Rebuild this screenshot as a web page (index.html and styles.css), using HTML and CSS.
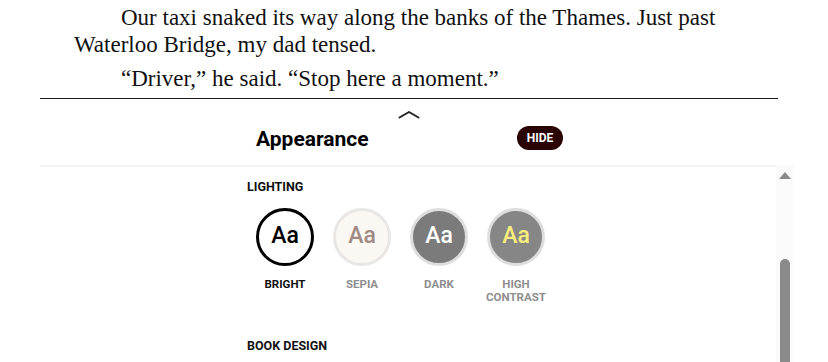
FILE: index.html
```html
<!DOCTYPE html>
<html lang="en">
<head>
<meta charset="utf-8">
<title>Reader</title>
<link rel="stylesheet" href="styles.css">
</head>
<body>
<div class="page">
  <div class="book-text">
    <p class="para">Our taxi snaked its way along the banks of the Thames. Just past Waterloo Bridge, my dad tensed.</p>
    <p class="para">“Driver,” he said. “Stop here a moment.”</p>
  </div>
  <div class="panel">
    <div class="handle">
      <svg class="caret" width="22" height="9" viewBox="0 0 22 9"><path d="M1.5 7.5 L11 2 L20.5 7.5" fill="none" stroke="#222" stroke-width="2" stroke-linecap="round" stroke-linejoin="round"/></svg>
    </div>
    <div class="header">
      <h2 class="title">Appearance</h2>
      <button class="hide-btn">HIDE</button>
    </div>
    <div class="body">
      <div class="scroll">
        <div class="content">
          <div class="section-label">LIGHTING</div>
          <div class="options">
            <div class="option">
              <div class="swatch swatch-bright">Aa</div>
              <div class="opt-label opt-active">BRIGHT</div>
            </div>
            <div class="option">
              <div class="swatch swatch-sepia">Aa</div>
              <div class="opt-label">SEPIA</div>
            </div>
            <div class="option">
              <div class="swatch swatch-dark">Aa</div>
              <div class="opt-label">DARK</div>
            </div>
            <div class="option">
              <div class="swatch swatch-contrast">Aa</div>
              <div class="opt-label">HIGH<br>CONTRAST</div>
            </div>
          </div>
          <div class="section-label section-book">BOOK DESIGN</div>
        </div>
      </div>
      <div class="scrollbar">
        <div class="sb-arrow"></div>
        <div class="sb-space"></div>
        <div class="sb-thumb"></div>
      </div>
    </div>
  </div>
</div>
</body>
</html>
```
FILE: styles.css
```css
html, body {
  margin: 0;
  padding: 0;
  background: #fff;
  overflow: hidden;
}
.page {
  width: 828px;
  height: 362px;
  overflow: hidden;
}
.book-text {
  padding: 4px 50px 0 74px;
  font-family: "Liberation Serif", "Times New Roman", serif;
  font-size: 23px;
  line-height: 27px;
  color: #111;
}
.para {
  margin: 0 0 7px 0;
  text-indent: 47px;
}
.para:last-child {
  margin-bottom: 0;
}
.panel {
  margin: 6px 0 0 40px;
  width: 738px;
  border-top: 1px solid #1a1a1a;
  font-family: Roboto, "Liberation Sans", Arial, sans-serif;
}
.handle {
  display: flex;
  justify-content: center;
  padding-top: 11px;
  height: 9px;
}
.caret {
  display: block;
}
.header {
  width: 307px;
  margin: 7px 0 0 216px;
  height: 24px;
  display: flex;
  align-items: center;
  justify-content: space-between;
  padding-bottom: 15px;
}
.title {
  margin: 0;
  font-size: 21px;
  font-weight: 700;
  color: #000;
  position: relative;
  top: 1px;
}
.hide-btn {
  border: none;
  background: #2a0404;
  color: #fff;
  font-family: Roboto, "Liberation Sans", Arial, sans-serif;
  font-weight: 700;
  font-size: 12px;
  width: 46px;
  height: 24px;
  border-radius: 12px;
  padding: 0;
}
.body {
  display: flex;
  width: 753px;
  height: 200px;
}
.scroll {
  width: 736px;
  flex: none;
  border-top: 2px solid #f3f3f3;
  overflow: hidden;
}
.content {
  width: 324px;
  margin-left: 207px;
  padding-top: 12px;
}
.section-label {
  font-size: 12.5px;
  font-weight: 700;
  color: #111;
  line-height: 15px;
}
.options {
  display: flex;
  gap: 19px;
  margin: 14px 0 0 9px;
}
.option {
  width: 58px;
  display: flex;
  flex-direction: column;
  align-items: center;
}
.swatch {
  width: 58px;
  height: 58px;
  box-sizing: border-box;
  border-radius: 50%;
  display: flex;
  align-items: center;
  justify-content: center;
  padding-bottom: 4px;
  font-size: 23px;
  font-weight: 500;
  border: 3px solid #e6e6e6;
}
.swatch-bright {
  background: #fff;
  border-color: #000;
  color: #000;
}
.swatch-sepia {
  background: #fbf7f2;
  border-color: #e9e7e5;
  color: #a08c84;
}
.swatch-dark {
  background: #7b7b7b;
  border-color: #dedede;
  color: #fff;
}
.swatch-contrast {
  background: #868686;
  border-color: #dedede;
  color: #f8ee7c;
}
.opt-label {
  margin-top: 12px;
  font-size: 11.5px;
  font-weight: 700;
  line-height: 12.5px;
  color: #8e8e8e;
  text-align: center;
  white-space: nowrap;
}
.opt-label.opt-active {
  color: #111;
}
.section-book {
  margin-top: 35px;
}
.scrollbar {
  width: 17px;
  flex: none;
  background: #fafafa;
  display: flex;
  flex-direction: column;
  align-items: center;
}
.sb-arrow {
  margin-top: 7px;
  width: 0;
  height: 0;
  border-left: 6px solid transparent;
  border-right: 6px solid transparent;
  border-bottom: 7px solid #8a8a8a;
}
.sb-space {
  height: 80px;
}
.sb-thumb {
  width: 10px;
  flex: 1;
  background: #8a8a8a;
  border-radius: 5px 5px 0 0;
}
```
